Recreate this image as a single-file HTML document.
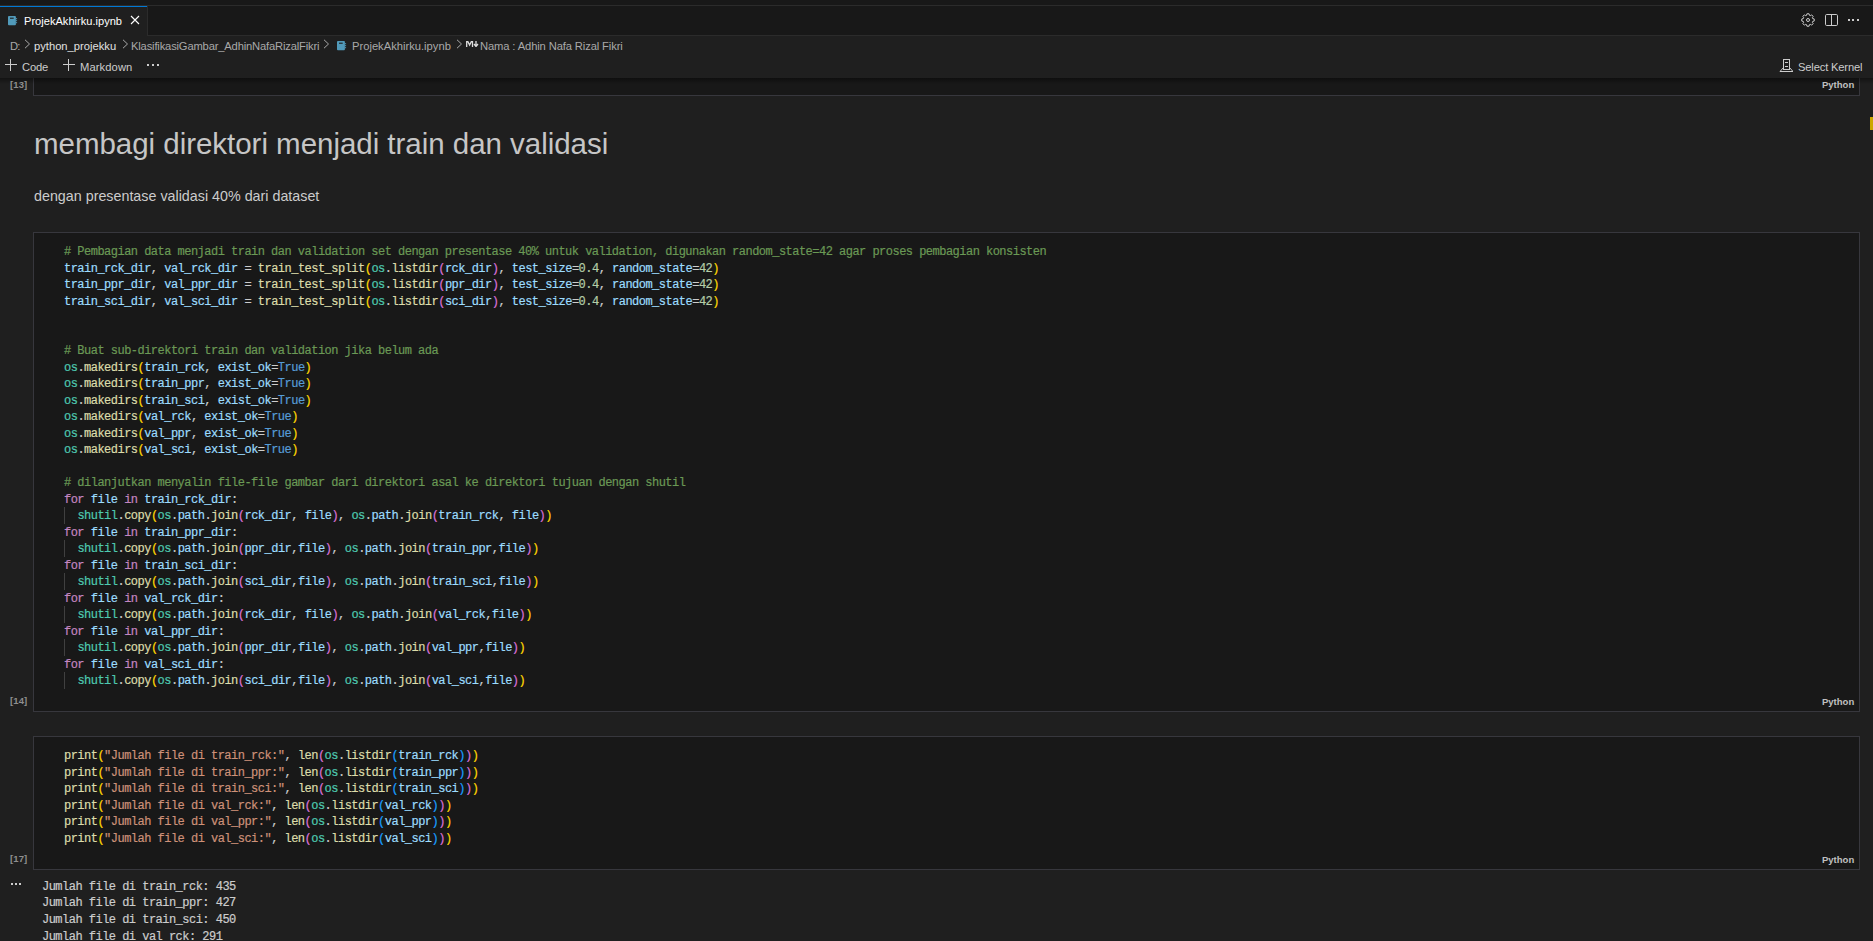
<!DOCTYPE html>
<html><head><meta charset="utf-8"><style>
html,body{margin:0;padding:0;background:#1f1f1f;width:1873px;height:941px;overflow:hidden}
.ui{position:absolute;font-family:"Liberation Sans",sans-serif;white-space:pre;line-height:1;}
.code{position:absolute;left:64px;font-family:"Liberation Mono",monospace;font-size:12px;line-height:16.5px;letter-spacing:-0.52px;white-space:pre;color:#cccccc;-webkit-text-stroke:0.2px}
svg{position:absolute}
</style></head><body>
<div style="position:absolute;left:0;top:0;width:1873px;height:5px;background:#181818"></div>
<div style="position:absolute;left:0;top:5px;width:1873px;height:1px;background:#2b2b2b"></div>
<div style="position:absolute;left:0;top:6px;width:1873px;height:29px;background:#181818"></div>
<div style="position:absolute;left:0;top:35px;width:1873px;height:1px;background:#2b2b2b"></div>
<div style="position:absolute;left:0;top:6px;width:147px;height:30px;background:#1f1f1f"></div>
<div style="position:absolute;left:0;top:6px;width:147px;height:1px;background:#0078d4"></div>
<div style="position:absolute;left:147px;top:6px;width:1px;height:29px;background:#2b2b2b"></div>
<svg style="position:absolute;left:8px;top:16px" width="10" height="10" viewBox="0 0 10 10"><rect x="0" y="0" width="7.9" height="9.2" rx="0.9" fill="#519aba"/><rect x="2" y="1.6" width="3.7" height="1.3" fill="#1f1f1f" opacity="0.85"/><rect x="7.9" y="2.2" width="1.2" height="1" fill="#519aba"/><rect x="7.9" y="4.2" width="1.2" height="1" fill="#519aba"/><rect x="7.9" y="6.2" width="1.2" height="1" fill="#519aba"/></svg>
<div class="ui" style="left:24px;top:16px;font-size:11.1px;color:#ffffff;letter-spacing:0px;">ProjekAkhirku.ipynb</div>
<svg style="position:absolute;left:130px;top:15px" width="10" height="10" viewBox="0 0 10 10"><path d="M1 1L9 9M9 1L1 9" stroke="#ffffff" stroke-width="1.1"/></svg>
<svg style="position:absolute;left:1801px;top:13px" width="14" height="14" viewBox="0 0 14 14" fill="none" stroke="#cccccc" stroke-width="1" stroke-linejoin="round">
<circle cx="7" cy="7" r="1.5"/>
<path d="M11.68 5.55 L13.21 5.93 L13.21 8.07 L11.68 8.45 L11.33 9.29 L12.14 10.64 L10.64 12.14 L9.29 11.33 L8.45 11.68 L8.07 13.21 L5.93 13.21 L5.55 11.68 L4.71 11.33 L3.36 12.14 L1.86 10.64 L2.67 9.29 L2.32 8.45 L0.79 8.07 L0.79 5.93 L2.32 5.55 L2.67 4.71 L1.86 3.36 L3.36 1.86 L4.71 2.67 L5.55 2.32 L5.93 0.79 L8.07 0.79 L8.45 2.32 L9.29 2.67 L10.64 1.86 L12.14 3.36 L11.33 4.71Z"/>
</svg>
<svg style="position:absolute;left:1825px;top:14px" width="13" height="12" viewBox="0 0 13 12" fill="none" stroke="#cccccc" stroke-width="1">
<rect x="0.5" y="0.5" width="12" height="11" rx="1.2"/><path d="M6.5 0.5v11"/></svg>
<div style="position:absolute;left:1848px;top:19px;width:2px;height:2px;background:#cccccc"></div>
<div style="position:absolute;left:1852px;top:19px;width:2px;height:2px;background:#cccccc"></div>
<div style="position:absolute;left:1857px;top:19px;width:2px;height:2px;background:#cccccc"></div>
<div class="ui" style="left:10px;top:41px;font-size:11.2px;color:#a9a9a9;letter-spacing:-0.8px;">D:</div>
<div class="ui" style="left:34px;top:41px;font-size:11.2px;color:#e0e0e0;letter-spacing:0px;">python_projekku</div>
<div class="ui" style="left:131px;top:41px;font-size:11.2px;color:#a9a9a9;letter-spacing:-0.17px;">KlasifikasiGambar_AdhinNafaRizalFikri</div>
<div class="ui" style="left:352px;top:41px;font-size:11.2px;color:#a9a9a9;letter-spacing:0px;">ProjekAkhirku.ipynb</div>
<div class="ui" style="left:480px;top:41px;font-size:11.2px;color:#a9a9a9;letter-spacing:-0.12px;">Nama : Adhin Nafa Rizal Fikri</div>
<svg style="position:absolute;left:24px;top:39px" width="7" height="10" viewBox="0 0 7 10"><path d="M1 0.8L5.5 5L1 9.2" stroke="#a9a9a9" stroke-width="1" fill="none"/></svg>
<svg style="position:absolute;left:122px;top:39px" width="7" height="10" viewBox="0 0 7 10"><path d="M1 0.8L5.5 5L1 9.2" stroke="#a9a9a9" stroke-width="1" fill="none"/></svg>
<svg style="position:absolute;left:323px;top:39px" width="7" height="10" viewBox="0 0 7 10"><path d="M1 0.8L5.5 5L1 9.2" stroke="#a9a9a9" stroke-width="1" fill="none"/></svg>
<svg style="position:absolute;left:456px;top:39px" width="7" height="10" viewBox="0 0 7 10"><path d="M1 0.8L5.5 5L1 9.2" stroke="#a9a9a9" stroke-width="1" fill="none"/></svg>
<svg style="position:absolute;left:337px;top:41px" width="10" height="10" viewBox="0 0 10 10"><rect x="0" y="0" width="7.9" height="9.2" rx="0.9" fill="#519aba"/><rect x="2" y="1.6" width="3.7" height="1.3" fill="#1f1f1f" opacity="0.85"/><rect x="7.9" y="2.2" width="1.2" height="1" fill="#519aba"/><rect x="7.9" y="4.2" width="1.2" height="1" fill="#519aba"/><rect x="7.9" y="6.2" width="1.2" height="1" fill="#519aba"/></svg>
<svg style="position:absolute;left:466px;top:41px" width="13" height="6" viewBox="0 0 13 6"><path d="M0.7 6V0.7h1.2L3.6 4 5.3 0.7h1.2V6" stroke="#dddddd" stroke-width="1.3" fill="none"/><path d="M10 0v4.5M8 3l2 2.5 2-2.5" stroke="#dddddd" stroke-width="1.3" fill="none"/></svg>
<svg style="position:absolute;left:5px;top:59px" width="12" height="12" viewBox="0 0 12 12"><path d="M5.5 0v12M0 5.5h12" stroke="#cccccc" stroke-width="1"/></svg>
<svg style="position:absolute;left:63px;top:59px" width="12" height="12" viewBox="0 0 12 12"><path d="M5.5 0v12M0 5.5h12" stroke="#cccccc" stroke-width="1"/></svg>
<div class="ui" style="left:22px;top:62px;font-size:11.2px;color:#cccccc;letter-spacing:-0.2px;">Code</div>
<div class="ui" style="left:80px;top:62px;font-size:11.2px;color:#cccccc;letter-spacing:0.1px;">Markdown</div>
<div class="ui" style="left:1798px;top:62px;font-size:11.2px;color:#cccccc;letter-spacing:-0.17px;">Select Kernel</div>
<div style="position:absolute;left:147px;top:64px;width:2px;height:2px;background:#cccccc"></div>
<div style="position:absolute;left:152px;top:64px;width:2px;height:2px;background:#cccccc"></div>
<div style="position:absolute;left:157px;top:64px;width:2px;height:2px;background:#cccccc"></div>
<svg style="position:absolute;left:1779px;top:58px" width="14" height="14" viewBox="0 0 14 14" fill="none" stroke="#cccccc" stroke-width="1">
<rect x="4.5" y="1.5" width="6" height="10"/><path d="M6 4.5h3M6 8.5h3"/><path d="M4.5 9.5L1 13.5h13l-3.5-4"/></svg>
<div style="position:absolute;left:0;top:78px;width:1873px;height:863px;background:#1f1f1f;overflow:hidden" id="nb">
<div style="position:absolute;box-sizing:border-box;left:33px;top:-8px;width:1827px;height:26px;background:#181818;border:1px solid #37373d;border-top-width:0"></div>
<div style="position:absolute;box-sizing:border-box;left:33px;top:154px;width:1827px;height:480px;background:#181818;border:1px solid #37373d;border-top-width:1px"></div>
<div style="position:absolute;box-sizing:border-box;left:33px;top:658px;width:1827px;height:134px;background:#181818;border:1px solid #37373d;border-top-width:1px"></div>
<div style="position:absolute;left:0;top:0;width:1873px;height:6px;background:linear-gradient(#000000 0%, rgba(0,0,0,0) 100%);opacity:0.4"></div>
<div style="position:absolute;left:1870px;top:39px;width:3px;height:13px;background:#cca700"></div>
<div class="ui" style="left:10px;top:2px;font-size:9.5px;color:#8e8e8e;letter-spacing:0.1px;font-weight:bold">[13]</div>
<div class="ui" style="left:1822px;top:2px;font-size:9.5px;color:#c0c0c0;letter-spacing:0px;font-weight:bold">Python</div>
<div class="ui" style="left:34px;top:51px;font-size:29.5px;color:#c6c6c6;letter-spacing:-0.03px;">membagi direktori menjadi train dan validasi</div>
<div class="ui" style="left:34px;top:111px;font-size:14.3px;color:#cccccc;letter-spacing:0px;">dengan presentase validasi 40% dari dataset</div>
<div class="ui" style="left:10px;top:618px;font-size:9.5px;color:#8e8e8e;letter-spacing:0.1px;font-weight:bold">[14]</div>
<div class="ui" style="left:1822px;top:619px;font-size:9.5px;color:#c0c0c0;letter-spacing:0px;font-weight:bold">Python</div>
<div class="ui" style="left:10px;top:776px;font-size:9.5px;color:#8e8e8e;letter-spacing:0.1px;font-weight:bold">[17]</div>
<div class="ui" style="left:1822px;top:777px;font-size:9.5px;color:#c0c0c0;letter-spacing:0px;font-weight:bold">Python</div>
<div class="code" style="top:166.3px"><span style="color:#6a9955"># Pembagian data menjadi train dan validation set dengan presentase 40% untuk validation, digunakan random_state=42 agar proses pembagian konsisten</span>
<span style="color:#9cdcfe">train_rck_dir</span><span style="color:#cccccc">,</span> <span style="color:#9cdcfe">val_rck_dir</span> <span style="color:#cccccc">=</span> <span style="color:#dcdcaa">train_test_split</span><span style="color:#ffd700">(</span><span style="color:#4ec9b0">os</span><span style="color:#cccccc">.</span><span style="color:#dcdcaa">listdir</span><span style="color:#da70d6">(</span><span style="color:#9cdcfe">rck_dir</span><span style="color:#da70d6">)</span><span style="color:#cccccc">,</span> <span style="color:#9cdcfe">test_size</span><span style="color:#cccccc">=</span><span style="color:#b5cea8">0.4</span><span style="color:#cccccc">,</span> <span style="color:#9cdcfe">random_state</span><span style="color:#cccccc">=</span><span style="color:#b5cea8">42</span><span style="color:#ffd700">)</span>
<span style="color:#9cdcfe">train_ppr_dir</span><span style="color:#cccccc">,</span> <span style="color:#9cdcfe">val_ppr_dir</span> <span style="color:#cccccc">=</span> <span style="color:#dcdcaa">train_test_split</span><span style="color:#ffd700">(</span><span style="color:#4ec9b0">os</span><span style="color:#cccccc">.</span><span style="color:#dcdcaa">listdir</span><span style="color:#da70d6">(</span><span style="color:#9cdcfe">ppr_dir</span><span style="color:#da70d6">)</span><span style="color:#cccccc">,</span> <span style="color:#9cdcfe">test_size</span><span style="color:#cccccc">=</span><span style="color:#b5cea8">0.4</span><span style="color:#cccccc">,</span> <span style="color:#9cdcfe">random_state</span><span style="color:#cccccc">=</span><span style="color:#b5cea8">42</span><span style="color:#ffd700">)</span>
<span style="color:#9cdcfe">train_sci_dir</span><span style="color:#cccccc">,</span> <span style="color:#9cdcfe">val_sci_dir</span> <span style="color:#cccccc">=</span> <span style="color:#dcdcaa">train_test_split</span><span style="color:#ffd700">(</span><span style="color:#4ec9b0">os</span><span style="color:#cccccc">.</span><span style="color:#dcdcaa">listdir</span><span style="color:#da70d6">(</span><span style="color:#9cdcfe">sci_dir</span><span style="color:#da70d6">)</span><span style="color:#cccccc">,</span> <span style="color:#9cdcfe">test_size</span><span style="color:#cccccc">=</span><span style="color:#b5cea8">0.4</span><span style="color:#cccccc">,</span> <span style="color:#9cdcfe">random_state</span><span style="color:#cccccc">=</span><span style="color:#b5cea8">42</span><span style="color:#ffd700">)</span>
 
 
<span style="color:#6a9955"># Buat sub-direktori train dan validation jika belum ada</span>
<span style="color:#4ec9b0">os</span><span style="color:#cccccc">.</span><span style="color:#dcdcaa">makedirs</span><span style="color:#ffd700">(</span><span style="color:#9cdcfe">train_rck</span><span style="color:#cccccc">,</span> <span style="color:#9cdcfe">exist_ok</span><span style="color:#cccccc">=</span><span style="color:#569cd6">True</span><span style="color:#ffd700">)</span>
<span style="color:#4ec9b0">os</span><span style="color:#cccccc">.</span><span style="color:#dcdcaa">makedirs</span><span style="color:#ffd700">(</span><span style="color:#9cdcfe">train_ppr</span><span style="color:#cccccc">,</span> <span style="color:#9cdcfe">exist_ok</span><span style="color:#cccccc">=</span><span style="color:#569cd6">True</span><span style="color:#ffd700">)</span>
<span style="color:#4ec9b0">os</span><span style="color:#cccccc">.</span><span style="color:#dcdcaa">makedirs</span><span style="color:#ffd700">(</span><span style="color:#9cdcfe">train_sci</span><span style="color:#cccccc">,</span> <span style="color:#9cdcfe">exist_ok</span><span style="color:#cccccc">=</span><span style="color:#569cd6">True</span><span style="color:#ffd700">)</span>
<span style="color:#4ec9b0">os</span><span style="color:#cccccc">.</span><span style="color:#dcdcaa">makedirs</span><span style="color:#ffd700">(</span><span style="color:#9cdcfe">val_rck</span><span style="color:#cccccc">,</span> <span style="color:#9cdcfe">exist_ok</span><span style="color:#cccccc">=</span><span style="color:#569cd6">True</span><span style="color:#ffd700">)</span>
<span style="color:#4ec9b0">os</span><span style="color:#cccccc">.</span><span style="color:#dcdcaa">makedirs</span><span style="color:#ffd700">(</span><span style="color:#9cdcfe">val_ppr</span><span style="color:#cccccc">,</span> <span style="color:#9cdcfe">exist_ok</span><span style="color:#cccccc">=</span><span style="color:#569cd6">True</span><span style="color:#ffd700">)</span>
<span style="color:#4ec9b0">os</span><span style="color:#cccccc">.</span><span style="color:#dcdcaa">makedirs</span><span style="color:#ffd700">(</span><span style="color:#9cdcfe">val_sci</span><span style="color:#cccccc">,</span> <span style="color:#9cdcfe">exist_ok</span><span style="color:#cccccc">=</span><span style="color:#569cd6">True</span><span style="color:#ffd700">)</span>
 
<span style="color:#6a9955"># dilanjutkan menyalin file-file gambar dari direktori asal ke direktori tujuan dengan shutil</span>
<span style="color:#c586c0">for</span> <span style="color:#9cdcfe">file</span> <span style="color:#c586c0">in</span> <span style="color:#9cdcfe">train_rck_dir</span><span style="color:#cccccc">:</span>
  <span style="color:#4ec9b0">shutil</span><span style="color:#cccccc">.</span><span style="color:#dcdcaa">copy</span><span style="color:#ffd700">(</span><span style="color:#4ec9b0">os</span><span style="color:#cccccc">.</span><span style="color:#9cdcfe">path</span><span style="color:#cccccc">.</span><span style="color:#dcdcaa">join</span><span style="color:#da70d6">(</span><span style="color:#9cdcfe">rck_dir</span><span style="color:#cccccc">,</span> <span style="color:#9cdcfe">file</span><span style="color:#da70d6">)</span><span style="color:#cccccc">,</span> <span style="color:#4ec9b0">os</span><span style="color:#cccccc">.</span><span style="color:#9cdcfe">path</span><span style="color:#cccccc">.</span><span style="color:#dcdcaa">join</span><span style="color:#da70d6">(</span><span style="color:#9cdcfe">train_rck</span><span style="color:#cccccc">,</span> <span style="color:#9cdcfe">file</span><span style="color:#da70d6">)</span><span style="color:#ffd700">)</span>
<span style="color:#c586c0">for</span> <span style="color:#9cdcfe">file</span> <span style="color:#c586c0">in</span> <span style="color:#9cdcfe">train_ppr_dir</span><span style="color:#cccccc">:</span>
  <span style="color:#4ec9b0">shutil</span><span style="color:#cccccc">.</span><span style="color:#dcdcaa">copy</span><span style="color:#ffd700">(</span><span style="color:#4ec9b0">os</span><span style="color:#cccccc">.</span><span style="color:#9cdcfe">path</span><span style="color:#cccccc">.</span><span style="color:#dcdcaa">join</span><span style="color:#da70d6">(</span><span style="color:#9cdcfe">ppr_dir</span><span style="color:#cccccc">,</span><span style="color:#9cdcfe">file</span><span style="color:#da70d6">)</span><span style="color:#cccccc">,</span> <span style="color:#4ec9b0">os</span><span style="color:#cccccc">.</span><span style="color:#9cdcfe">path</span><span style="color:#cccccc">.</span><span style="color:#dcdcaa">join</span><span style="color:#da70d6">(</span><span style="color:#9cdcfe">train_ppr</span><span style="color:#cccccc">,</span><span style="color:#9cdcfe">file</span><span style="color:#da70d6">)</span><span style="color:#ffd700">)</span>
<span style="color:#c586c0">for</span> <span style="color:#9cdcfe">file</span> <span style="color:#c586c0">in</span> <span style="color:#9cdcfe">train_sci_dir</span><span style="color:#cccccc">:</span>
  <span style="color:#4ec9b0">shutil</span><span style="color:#cccccc">.</span><span style="color:#dcdcaa">copy</span><span style="color:#ffd700">(</span><span style="color:#4ec9b0">os</span><span style="color:#cccccc">.</span><span style="color:#9cdcfe">path</span><span style="color:#cccccc">.</span><span style="color:#dcdcaa">join</span><span style="color:#da70d6">(</span><span style="color:#9cdcfe">sci_dir</span><span style="color:#cccccc">,</span><span style="color:#9cdcfe">file</span><span style="color:#da70d6">)</span><span style="color:#cccccc">,</span> <span style="color:#4ec9b0">os</span><span style="color:#cccccc">.</span><span style="color:#9cdcfe">path</span><span style="color:#cccccc">.</span><span style="color:#dcdcaa">join</span><span style="color:#da70d6">(</span><span style="color:#9cdcfe">train_sci</span><span style="color:#cccccc">,</span><span style="color:#9cdcfe">file</span><span style="color:#da70d6">)</span><span style="color:#ffd700">)</span>
<span style="color:#c586c0">for</span> <span style="color:#9cdcfe">file</span> <span style="color:#c586c0">in</span> <span style="color:#9cdcfe">val_rck_dir</span><span style="color:#cccccc">:</span>
  <span style="color:#4ec9b0">shutil</span><span style="color:#cccccc">.</span><span style="color:#dcdcaa">copy</span><span style="color:#ffd700">(</span><span style="color:#4ec9b0">os</span><span style="color:#cccccc">.</span><span style="color:#9cdcfe">path</span><span style="color:#cccccc">.</span><span style="color:#dcdcaa">join</span><span style="color:#da70d6">(</span><span style="color:#9cdcfe">rck_dir</span><span style="color:#cccccc">,</span> <span style="color:#9cdcfe">file</span><span style="color:#da70d6">)</span><span style="color:#cccccc">,</span> <span style="color:#4ec9b0">os</span><span style="color:#cccccc">.</span><span style="color:#9cdcfe">path</span><span style="color:#cccccc">.</span><span style="color:#dcdcaa">join</span><span style="color:#da70d6">(</span><span style="color:#9cdcfe">val_rck</span><span style="color:#cccccc">,</span><span style="color:#9cdcfe">file</span><span style="color:#da70d6">)</span><span style="color:#ffd700">)</span>
<span style="color:#c586c0">for</span> <span style="color:#9cdcfe">file</span> <span style="color:#c586c0">in</span> <span style="color:#9cdcfe">val_ppr_dir</span><span style="color:#cccccc">:</span>
  <span style="color:#4ec9b0">shutil</span><span style="color:#cccccc">.</span><span style="color:#dcdcaa">copy</span><span style="color:#ffd700">(</span><span style="color:#4ec9b0">os</span><span style="color:#cccccc">.</span><span style="color:#9cdcfe">path</span><span style="color:#cccccc">.</span><span style="color:#dcdcaa">join</span><span style="color:#da70d6">(</span><span style="color:#9cdcfe">ppr_dir</span><span style="color:#cccccc">,</span><span style="color:#9cdcfe">file</span><span style="color:#da70d6">)</span><span style="color:#cccccc">,</span> <span style="color:#4ec9b0">os</span><span style="color:#cccccc">.</span><span style="color:#9cdcfe">path</span><span style="color:#cccccc">.</span><span style="color:#dcdcaa">join</span><span style="color:#da70d6">(</span><span style="color:#9cdcfe">val_ppr</span><span style="color:#cccccc">,</span><span style="color:#9cdcfe">file</span><span style="color:#da70d6">)</span><span style="color:#ffd700">)</span>
<span style="color:#c586c0">for</span> <span style="color:#9cdcfe">file</span> <span style="color:#c586c0">in</span> <span style="color:#9cdcfe">val_sci_dir</span><span style="color:#cccccc">:</span>
  <span style="color:#4ec9b0">shutil</span><span style="color:#cccccc">.</span><span style="color:#dcdcaa">copy</span><span style="color:#ffd700">(</span><span style="color:#4ec9b0">os</span><span style="color:#cccccc">.</span><span style="color:#9cdcfe">path</span><span style="color:#cccccc">.</span><span style="color:#dcdcaa">join</span><span style="color:#da70d6">(</span><span style="color:#9cdcfe">sci_dir</span><span style="color:#cccccc">,</span><span style="color:#9cdcfe">file</span><span style="color:#da70d6">)</span><span style="color:#cccccc">,</span> <span style="color:#4ec9b0">os</span><span style="color:#cccccc">.</span><span style="color:#9cdcfe">path</span><span style="color:#cccccc">.</span><span style="color:#dcdcaa">join</span><span style="color:#da70d6">(</span><span style="color:#9cdcfe">val_sci</span><span style="color:#cccccc">,</span><span style="color:#9cdcfe">file</span><span style="color:#da70d6">)</span><span style="color:#ffd700">)</span></div>
<div class="code" style="top:670.3px"><span style="color:#dcdcaa">print</span><span style="color:#ffd700">(</span><span style="color:#ce9178">&quot;Jumlah file di train_rck:&quot;</span><span style="color:#cccccc">,</span> <span style="color:#dcdcaa">len</span><span style="color:#da70d6">(</span><span style="color:#4ec9b0">os</span><span style="color:#cccccc">.</span><span style="color:#dcdcaa">listdir</span><span style="color:#179fff">(</span><span style="color:#9cdcfe">train_rck</span><span style="color:#179fff">)</span><span style="color:#da70d6">)</span><span style="color:#ffd700">)</span>
<span style="color:#dcdcaa">print</span><span style="color:#ffd700">(</span><span style="color:#ce9178">&quot;Jumlah file di train_ppr:&quot;</span><span style="color:#cccccc">,</span> <span style="color:#dcdcaa">len</span><span style="color:#da70d6">(</span><span style="color:#4ec9b0">os</span><span style="color:#cccccc">.</span><span style="color:#dcdcaa">listdir</span><span style="color:#179fff">(</span><span style="color:#9cdcfe">train_ppr</span><span style="color:#179fff">)</span><span style="color:#da70d6">)</span><span style="color:#ffd700">)</span>
<span style="color:#dcdcaa">print</span><span style="color:#ffd700">(</span><span style="color:#ce9178">&quot;Jumlah file di train_sci:&quot;</span><span style="color:#cccccc">,</span> <span style="color:#dcdcaa">len</span><span style="color:#da70d6">(</span><span style="color:#4ec9b0">os</span><span style="color:#cccccc">.</span><span style="color:#dcdcaa">listdir</span><span style="color:#179fff">(</span><span style="color:#9cdcfe">train_sci</span><span style="color:#179fff">)</span><span style="color:#da70d6">)</span><span style="color:#ffd700">)</span>
<span style="color:#dcdcaa">print</span><span style="color:#ffd700">(</span><span style="color:#ce9178">&quot;Jumlah file di val_rck:&quot;</span><span style="color:#cccccc">,</span> <span style="color:#dcdcaa">len</span><span style="color:#da70d6">(</span><span style="color:#4ec9b0">os</span><span style="color:#cccccc">.</span><span style="color:#dcdcaa">listdir</span><span style="color:#179fff">(</span><span style="color:#9cdcfe">val_rck</span><span style="color:#179fff">)</span><span style="color:#da70d6">)</span><span style="color:#ffd700">)</span>
<span style="color:#dcdcaa">print</span><span style="color:#ffd700">(</span><span style="color:#ce9178">&quot;Jumlah file di val_ppr:&quot;</span><span style="color:#cccccc">,</span> <span style="color:#dcdcaa">len</span><span style="color:#da70d6">(</span><span style="color:#4ec9b0">os</span><span style="color:#cccccc">.</span><span style="color:#dcdcaa">listdir</span><span style="color:#179fff">(</span><span style="color:#9cdcfe">val_ppr</span><span style="color:#179fff">)</span><span style="color:#da70d6">)</span><span style="color:#ffd700">)</span>
<span style="color:#dcdcaa">print</span><span style="color:#ffd700">(</span><span style="color:#ce9178">&quot;Jumlah file di val_sci:&quot;</span><span style="color:#cccccc">,</span> <span style="color:#dcdcaa">len</span><span style="color:#da70d6">(</span><span style="color:#4ec9b0">os</span><span style="color:#cccccc">.</span><span style="color:#dcdcaa">listdir</span><span style="color:#179fff">(</span><span style="color:#9cdcfe">val_sci</span><span style="color:#179fff">)</span><span style="color:#da70d6">)</span><span style="color:#ffd700">)</span></div>
<div class="code" style="top:800.8px;left:42px;color:#cccccc;line-height:16.67px">Jumlah file di train_rck: 435
Jumlah file di train_ppr: 427
Jumlah file di train_sci: 450
Jumlah file di val_rck: 291</div>
<div style="position:absolute;left:64px;top:429.3px;width:1px;height:16.5px;background:#404040"></div>
<div style="position:absolute;left:64px;top:462.3px;width:1px;height:16.5px;background:#404040"></div>
<div style="position:absolute;left:64px;top:495.3px;width:1px;height:16.5px;background:#404040"></div>
<div style="position:absolute;left:64px;top:528.3px;width:1px;height:16.5px;background:#404040"></div>
<div style="position:absolute;left:64px;top:561.3px;width:1px;height:16.5px;background:#404040"></div>
<div style="position:absolute;left:64px;top:594.3px;width:1px;height:16.5px;background:#404040"></div>
<div style="position:absolute;left:11px;top:805px;width:2px;height:2px;background:#cccccc"></div>
<div style="position:absolute;left:15px;top:805px;width:2px;height:2px;background:#cccccc"></div>
<div style="position:absolute;left:19px;top:805px;width:2px;height:2px;background:#cccccc"></div>
</div>
</body></html>
